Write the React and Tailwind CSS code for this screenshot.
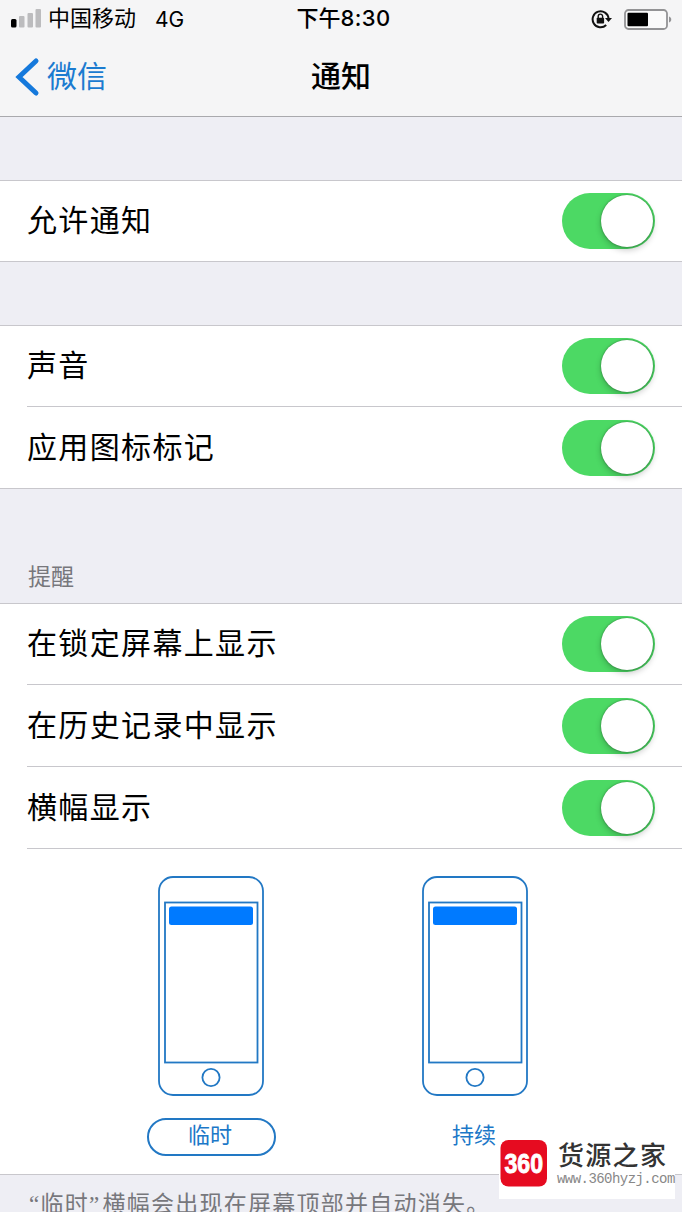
import React, { useState } from 'react';

const Toggle = ({ checked, onChange }) => (
  <button
    type="button"
    role="switch"
    aria-checked={checked}
    onClick={onChange}
    className={`flex h-[56px] w-[93px] shrink-0 items-center rounded-full px-[2px] ${
      checked ? 'justify-end bg-[#4cd964]' : 'justify-start bg-gray-300'
    }`}
  >
    <span className="h-[52px] w-[52px] rounded-full bg-white shadow-[0_3px_6px_rgba(0,0,0,0.22),0_0_2px_rgba(0,0,0,0.4)]" />
  </button>
);

const SettingRow = ({ label, height = 'h-[82px]', last, checked, onChange }) => (
  <div className="pl-[27px]">
    <div
      className={`flex items-center justify-between pr-[27px] ${height} ${
        last ? '' : 'border-b border-[#c8c7cc]'
      }`}
    >
      <span className="text-[30px] leading-none tracking-[1.35px] text-black">{label}</span>
      <Toggle checked={checked} onChange={onChange} />
    </div>
  </div>
);

const PhonePreview = ({ label, selected, onClick }) => (
  <button type="button" onClick={onClick} className="flex w-[130px] flex-col items-center text-[#1c78c8]">
    <svg width="108" height="222" viewBox="0 0 108 222" fill="none" stroke="#2278c4" strokeWidth="1.8">
      <rect x="2" y="2" width="104" height="218" rx="14" />
      <rect x="8" y="27.5" width="92.5" height="160" />
      <rect x="12" y="31.5" width="84" height="18.5" rx="2.5" fill="#007aff" stroke="none" />
      <circle cx="54" cy="202.5" r="8.6" />
    </svg>
    <span
      className={`mt-[21px] flex h-[38px] w-[129px] items-center justify-center rounded-full border-2 pb-[2px] pr-[2px] text-[22px] leading-none ${
        selected ? 'border-[#2278c4]' : 'border-transparent'
      }`}
    >
      {label}
    </span>
  </button>
);

const StatusBar = () => (
  <div className="grid h-[38px] grid-cols-3 items-center text-[22px] leading-none text-black">
    <div className="flex items-center pl-[11px]">
      <svg width="31" height="20" viewBox="0 0 31 20">
        <rect x="0" y="10" width="5.5" height="8.5" rx="1.5" fill="#000" />
        <rect x="8" y="7" width="5.5" height="11.5" rx="1" fill="#bcbcbe" />
        <rect x="16.5" y="4" width="5.5" height="14.5" rx="1" fill="#bcbcbe" />
        <rect x="24.5" y="0" width="5.5" height="18.5" rx="1" fill="#bcbcbe" />
      </svg>
      <span className="ml-[6px]">中国移动</span>
      <span className="ml-[19px] font-['Inter',sans-serif] text-[21px]">4G</span>
    </div>
    <div className="whitespace-nowrap pb-px pl-[5px] text-center font-medium">
      下午<span className="font-['Inter',sans-serif] text-[22px] font-medium tracking-[0.4px]">8:30</span>
    </div>
    <div className="flex items-center justify-end pr-[10px]">
      <svg width="22" height="20" viewBox="0 0 22 20">
        <path d="M15.2 16A8 8 0 1 1 17.6 9.5" fill="none" stroke="#111" strokeWidth="2" />
        <path d="M14 9h7l-3.5 4z" fill="#111" />
        <rect x="5.7" y="8.8" width="7.4" height="5.7" rx="0.8" fill="#111" />
        <path d="M7.2 9V7.3a2.2 2.2 0 0 1 4.4 0V9" fill="none" stroke="#111" strokeWidth="1.4" />
      </svg>
      <svg className="ml-[11px]" width="48" height="21" viewBox="0 0 48 21">
        <rect x="1" y="1" width="42" height="19" rx="3.5" fill="#fafafa" stroke="#939395" strokeWidth="1.8" />
        <rect x="3.5" y="3.8" width="20.5" height="13.4" rx="1" fill="#000" />
        <path d="M45 7.5c3 .8 3 5.2 0 6z" fill="#939395" />
      </svg>
    </div>
  </div>
);

const Watermark = () => (
  <div className="absolute left-[499px] top-[1138px] flex h-[61px] w-[176px] items-start bg-white">
    <svg className="ml-[1px] mt-[1px] shrink-0 overflow-visible" width="48" height="48" viewBox="0 0 48 48">
      <rect x="0.5" y="1" width="46.5" height="46.5" rx="8" fill="#e60b20" />
      <text
        x="4.5"
        y="33.5"
        textLength="38.5"
        lengthAdjust="spacingAndGlyphs"
        className="font-['Liberation_Sans',sans-serif] text-[28px] font-bold"
        fill="#fff"
        stroke="#fff"
        strokeWidth="0.9"
      >
        360
      </text>
    </svg>
    <div className="ml-[9px] pt-[4px]">
      <div className="whitespace-nowrap pl-px text-[26px] font-medium leading-[29px] tracking-[1.3px] text-[#333]">货源之家</div>
      <div className="whitespace-nowrap font-['Liberation_Mono',monospace] text-[14px] leading-[17px] tracking-[-0.55px] text-[#888]">
        www.360hyzj.com
      </div>
    </div>
  </div>
);

const NotificationSettings = () => {
  const [settings, setSettings] = useState({
    allow: true,
    sound: true,
    badge: true,
    lockScreen: true,
    history: true,
    banner: true,
  });
  const [bannerStyle, setBannerStyle] = useState('temporary');

  const toggle = (key) => setSettings({ ...settings, [key]: !settings[key] });

  return (
    <div className="relative h-[1212px] w-[682px] overflow-hidden bg-[#eeeef4] font-['Liberation_Sans','Noto_Sans_CJK_SC',sans-serif]">
      {/* Header */}
      <header className="h-[117px] border-b border-[#a9a9ad] bg-[#f5f5f6]">
        <StatusBar />
        <div className="grid h-[77px] grid-cols-3 items-center text-[30px] leading-none">
          <button type="button" className="flex items-center pl-[15px] text-[#1b7bd0]">
            <svg width="25" height="40" viewBox="0 0 25 40" fill="none" stroke="#1579dc" strokeWidth="5">
              <path d="M21 4 4 20 21 36" strokeLinecap="round" strokeLinejoin="miter" />
            </svg>
            <span className="ml-[7px]">微信</span>
          </button>
          <h1 className="text-center font-medium">通知</h1>
        </div>
      </header>

      {/* Allow notifications */}
      <section className="mt-[63px] border-y border-[#c8c7cc] bg-white">
        <SettingRow label="允许通知" height="h-[80px]" last checked={settings.allow} onChange={() => toggle('allow')} />
      </section>

      <section className="mt-[63px] border-y border-[#c8c7cc] bg-white">
        <SettingRow label="声音" height="h-[81px]" checked={settings.sound} onChange={() => toggle('sound')} />
        <SettingRow label="应用图标标记" height="h-[81px]" last checked={settings.badge} onChange={() => toggle('badge')} />
      </section>

      {/* Alerts */}
      <h2 className="flex h-[114px] items-end pb-[14px] pl-[28px] text-[23px] leading-none text-[#77777c]">提醒</h2>
      <section className="h-[572px] border-y border-[#c8c7cc] bg-white">
        <SettingRow
          label="在锁定屏幕上显示"
          height="h-[81px]"
          checked={settings.lockScreen}
          onChange={() => toggle('lockScreen')}
        />
        <SettingRow label="在历史记录中显示" checked={settings.history} onChange={() => toggle('history')} />
        <SettingRow label="横幅显示" checked={settings.banner} onChange={() => toggle('banner')} />
        <div className="flex gap-[134px] pl-[146px] pt-[26px]">
          <PhonePreview
            label="临时"
            selected={bannerStyle === 'temporary'}
            onClick={() => setBannerStyle('temporary')}
          />
          <PhonePreview
            label="持续"
            selected={bannerStyle === 'persistent'}
            onClick={() => setBannerStyle('persistent')}
          />
        </div>
      </section>
      <p className="whitespace-nowrap pl-[29px] pt-[18px] font-['Liberation_Serif','Noto_Sans_CJK_SC',sans-serif] text-[23px] leading-none tracking-[1.25px] text-[#77777c]">
        “临时”<span className="pl-[2px]">横幅会出现在屏幕顶部并自动消失。</span>
      </p>

      <Watermark />
    </div>
  );
};

export default NotificationSettings;
